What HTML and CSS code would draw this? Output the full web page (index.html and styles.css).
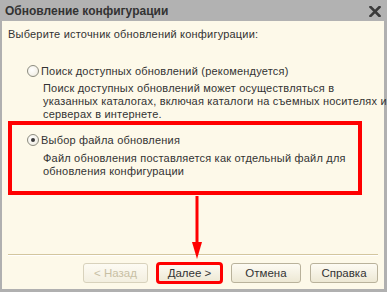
FILE: index.html
```html
<!DOCTYPE html>
<html lang="ru">
<head>
<meta charset="utf-8">
<link rel="stylesheet" href="styles.css">
</head>
<body>
<div class="window">
  <div class="titlebar">
    <span class="title">Обновление конфигурации</span>
    <svg class="close" width="12" height="11" viewBox="0 0 12 11"><path d="M1.5 1 L10.5 10 M10.5 1 L1.5 10" stroke="#3a3a3a" stroke-width="2.6" stroke-linecap="square"/></svg>
  </div>
  <div class="content">
    <div class="intro">Выберите источник обновлений конфигурации:</div>
    <div class="option option-first">
      <div class="opt-row"><span class="radio"></span><span class="opt-label">Поиск доступных обновлений (рекомендуется)</span></div>
      <div class="desc">Поиск доступных обновлений может осуществляться в<br>указанных каталогах, включая каталоги на съемных носителях и<br>серверах в интернете.</div>
    </div>
    <div class="option option-marked">
      <div class="opt-row"><span class="radio checked"></span><span class="opt-label">Выбор файла обновления</span></div>
      <div class="desc">Файл обновления поставляется как отдельный файл для<br>обновления конфигурации</div>
    </div>
    <div class="spacer"></div>
    <div class="separator"></div>
    <div class="buttons">
      <button class="btn disabled">&lt; Назад</button>
      <button class="btn marked">Далее &gt;</button>
      <button class="btn">Отмена</button>
      <button class="btn">Справка</button>
    </div>
  </div>
  <svg class="arrow" width="14" height="64" viewBox="0 0 14 64"><line x1="7" y1="0" x2="7" y2="50" stroke="#f00" stroke-width="3"/><path d="M2 46 L12 46 L7 63 Z" fill="#f00"/></svg>
</div>
</body>
</html>
```
FILE: styles.css
```css
* { box-sizing: border-box; }
html, body { margin: 0; padding: 0; }
body { width: 387px; height: 292px; overflow: hidden; background: #fdf9e9; }
.window {
  position: relative;
  width: 387px;
  height: 292px;
  display: flex;
  flex-direction: column;
  background: #fdf9e9;
  border-left: 2px solid #b0b0b0;
  border-right: 3px solid #b0b0b0;
  border-bottom: 3px solid #b0b0b0;
  font-family: "Liberation Sans", Arial, sans-serif;
  font-size: 11px;
  letter-spacing: 0.2px;
  color: #333;
  white-space: nowrap;
}
.titlebar {
  height: 21px;
  margin-left: -2px;
  margin-right: -3px;
  background: #b2b2b2;
  display: flex;
  align-items: center;
  justify-content: space-between;
  padding: 0 6px 0 5px;
}
.title { font-weight: bold; font-size: 12px; letter-spacing: 0; color: #333; }
.close { display: block; margin-top: 1px; }
.content { flex: 1; display: flex; flex-direction: column; }
.intro { margin: 6px 0 0 6px; line-height: 14px; }
.option-first { margin: 23px 0 0 25px; }
.opt-row { display: flex; align-items: center; height: 14px; }
.radio {
  width: 12px; height: 12px; border-radius: 50%;
  border: 1px solid #8c8c80;
  background: radial-gradient(circle at 40% 40%, #fff 0%, #f4f2ea 60%, #e2dfd2 100%);
  margin-right: 2px;
  position: relative;
  flex: none;
}
.radio.checked::after {
  content: ""; position: absolute; left: 3px; top: 3px;
  width: 4px; height: 4px; border-radius: 50%; background: #3a3a3a;
}
.desc { margin: 4px 0 0 16px; line-height: 13px; }
.option-marked {
  margin: 0 0 0 6px;
  width: 354px;
  border: 4px solid #f00;
  padding: 8px 0 13px 15px;
}
.option-marked .desc { margin-top: 5px; }
.spacer { flex: 1; }
.separator { height: 2px; margin: 0 6px 0 6px; background: #d3c69e; border-bottom: 1px solid #fff; }
.buttons { display: flex; justify-content: flex-end; gap: 9px; padding: 7px 6px 6px 0; }
.btn {
  height: 20px;
  min-width: 65px;
  padding: 0 4px;
  font: inherit;
  font-size: 11.5px;
  color: #333;
  background: linear-gradient(#fdfbf3, #ede8d4);
  border: 1px solid #b9b29b;
  border-radius: 3px;
}
.btn.disabled { color: #c8c0a4; border-color: #d8d2bc; background: linear-gradient(#fdfbf3, #f3efe0); width: 65px; }
.btn.marked { outline: 3px solid #f00; outline-offset: -2px; width: 65px; }
.btn:nth-child(3) { width: 70px; }
.btn:nth-child(4) { width: 68px; }
.arrow { position: absolute; left: 188px; top: 196px; }
```
